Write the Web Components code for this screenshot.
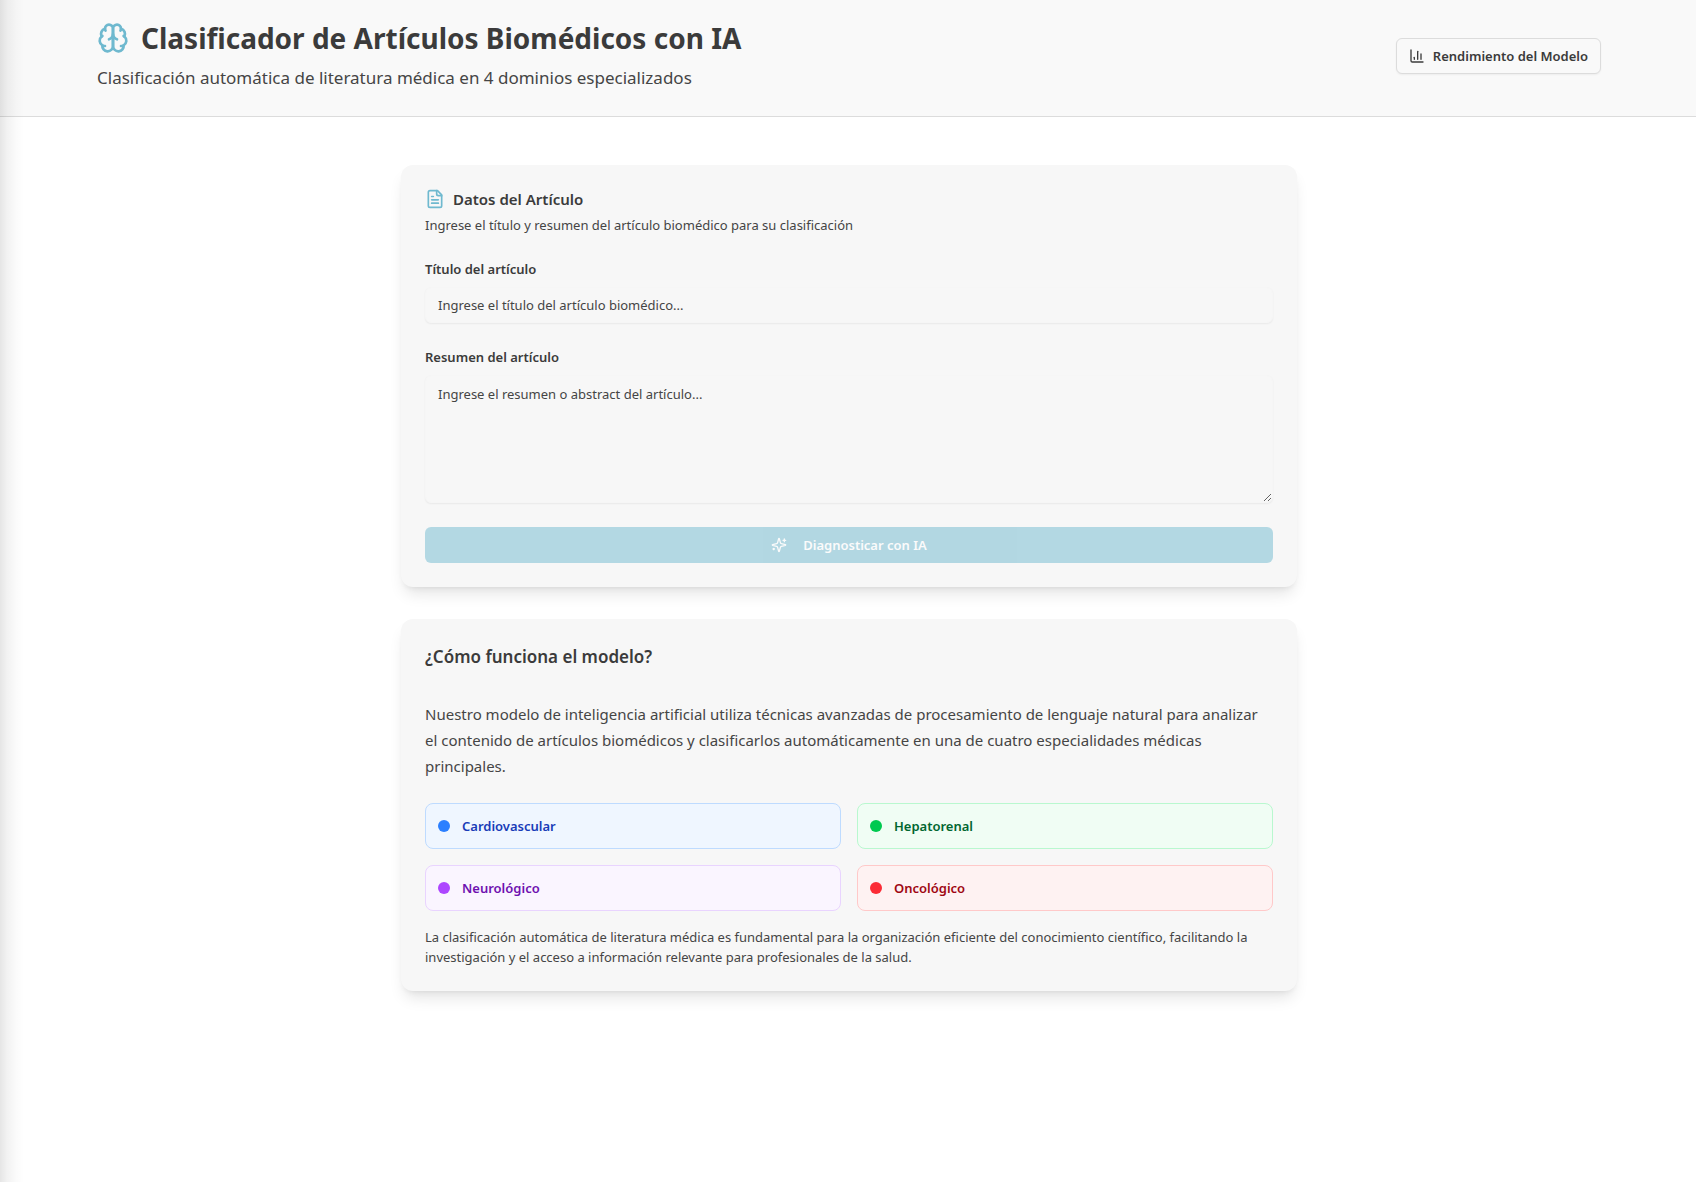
<!DOCTYPE html>
<html lang="es">
<head>
<meta charset="utf-8">
<meta name="viewport" content="width=device-width, initial-scale=1">
<title>Clasificador de Artículos Biomédicos con IA</title>
<style>
  :root {
    --ink: #3b3b3b;
    --muted: #454545;
    --accent: #6fb9cf;
    --card: #f7f7f7;
    --line: #dcdcdc;
    --text-sm: 13px;
    --text-md: 15px;
    --sans: "Segoe UI", "Noto Sans", "Open Sans", sans-serif;
  }
  body {
    margin: 0;
    min-height: 100vh;
    background: #fff;
    color: var(--ink);
    font-family: var(--sans);
    font-size: var(--text-md);
  }
</style>
</head>
<body>
<app-shell>
  <app-header slot="header">
    <ui-icon slot="icon" name="brain" size="32"></ui-icon>
    <span slot="title">Clasificador de Artículos Biomédicos con IA</span>
    <span slot="subtitle">Clasificación automática de literatura médica en 4 dominios especializados</span>
    <action-button slot="action" icon="chart">Rendimiento del Modelo</action-button>
  </app-header>
  <article-form></article-form>
  <model-info></model-info>
</app-shell>

<script>
const define = (name, html, setup) => {
  const template = document.createElement('template');
  template.innerHTML = '<style>*{box-sizing:border-box}h1,h2,p{margin:0}</style>' + html;
  customElements.define(name, class extends HTMLElement {
    connectedCallback() {
      if (this.shadowRoot) return;
      this.attachShadow({ mode: 'open' }).append(template.content.cloneNode(true));
      if (setup) setup(this, this.shadowRoot);
    }
  });
};

const ICONS = {
  brain: '<path d="M12 5a3 3 0 1 0-5.997.125 4 4 0 0 0-2.526 5.77 4 4 0 0 0 .556 6.588A4 4 0 1 0 12 18Z"/><path d="M12 5a3 3 0 1 1 5.997.125 4 4 0 0 1 2.526 5.77 4 4 0 0 1-.556 6.588A4 4 0 1 1 12 18Z"/><path d="M15 13a4.5 4.5 0 0 1-3-4 4.5 4.5 0 0 1-3 4"/><path d="M17.599 6.5a3 3 0 0 0 .399-1.375"/><path d="M6.003 5.125A3 3 0 0 0 6.401 6.5"/><path d="M3.477 10.896a4 4 0 0 1 .585-.396"/><path d="M19.938 10.5a4 4 0 0 1 .585.396"/><path d="M6 18a4 4 0 0 1-1.967-.516"/><path d="M19.967 17.484A4 4 0 0 1 18 18"/>',
  chart: '<path d="M3 3v16a2 2 0 0 0 2 2h16"/><path d="M18 17V9"/><path d="M13 17V5"/><path d="M8 17v-3"/>',
  file: '<path d="M15 2H6a2 2 0 0 0-2 2v16a2 2 0 0 0 2 2h12a2 2 0 0 0 2-2V7Z"/><path d="M14 2v4a2 2 0 0 0 2 2h4"/><path d="M10 9H8"/><path d="M16 13H8"/><path d="M16 17H8"/>',
  sparkles: '<path d="M9.937 15.5A2 2 0 0 0 8.5 14.063l-6.135-1.582a.5.5 0 0 1 0-.962L8.5 9.936A2 2 0 0 0 9.937 8.5l1.582-6.135a.5.5 0 0 1 .963 0L14.063 8.5A2 2 0 0 0 15.5 9.937l6.135 1.581a.5.5 0 0 1 0 .964L15.5 14.063a2 2 0 0 0-1.437 1.437l-1.582 6.135a.5.5 0 0 1-.963 0z"/><path d="M20 3v4"/><path d="M22 5h-4"/><path d="M4 17v2"/><path d="M5 18H3"/>'
};

define('ui-icon', `
  <style>
    :host { display: block; flex: none; line-height: 0; }
    svg { display: block; fill: none; stroke: currentColor; stroke-width: 2; stroke-linecap: round; stroke-linejoin: round; }
  </style>
  <svg viewBox="0 0 24 24" aria-hidden="true"></svg>`,
  (host, root) => {
    const svg = root.querySelector('svg');
    const size = host.getAttribute('size') || 16;
    svg.setAttribute('width', size);
    svg.setAttribute('height', size);
    svg.innerHTML = ICONS[host.getAttribute('name')];
  });

define('app-shell', `
  <style>
    :host { display: block; min-height: 100vh; position: relative; }
    main { box-sizing: content-box; max-width: 896px; margin: 0 auto; padding: 48px 16px; display: grid; gap: 32px; }
    .wrap { padding-left: 2px; }
    .edge { position: absolute; inset: 0 auto 0 0; width: 24px; pointer-events: none;
      background: linear-gradient(90deg, rgba(0,0,0,.1), rgba(0,0,0,.05) 30%, rgba(0,0,0,.02) 65%, transparent); }
  </style>
  <slot name="header"></slot>
  <div class="wrap"><main><slot></slot></main></div>
  <div class="edge"></div>`);

define('app-header', `
  <style>
    :host { display: block; padding-left: 2px; background: #f9f9f9; border-bottom: 1px solid var(--line); }
    header { max-width: 1536px; margin: 0 auto; padding: 20px 16px 24px; display: flex; align-items: center; justify-content: space-between; gap: 24px; }
    .brand { display: flex; align-items: center; gap: 12px; }
    ::slotted(ui-icon) { color: var(--accent); }
    h1 { font-size: 28px; line-height: 36px; font-weight: 700; }
    p { margin-top: 8px; font-size: 17px; line-height: 28px; color: var(--muted); }
  </style>
  <header>
    <div>
      <div class="brand"><slot name="icon"></slot><h1><slot name="title"></slot></h1></div>
      <p><slot name="subtitle"></slot></p>
    </div>
    <slot name="action"></slot>
  </header>`);

define('action-button', `
  <style>
    :host { display: block; flex: none; }
    button { display: flex; align-items: center; justify-content: center; gap: 8px; width: 100%; height: 36px; padding: 0 12px;
      border: 1px solid var(--line); border-radius: 6px; background: #f9f9f9; color: var(--ink);
      font: 600 var(--text-sm)/20px var(--sans); box-shadow: 0 1px 2px rgba(0,0,0,.05); }
    :host([primary]) button { gap: 16px; border: 0; background: var(--accent); color: #fff; box-shadow: none; }
    button:disabled { opacity: .5; }
  </style>
  <button type="button"><ui-icon></ui-icon><span><slot></slot></span></button>`,
  (host, root) => {
    const icon = document.createElement('ui-icon');
    icon.setAttribute('name', host.getAttribute('icon'));
    root.querySelector('ui-icon').replaceWith(icon);
    root.querySelector('button').disabled = host.hasAttribute('disabled');
  });

define('ui-card', `
  <style>
    :host { display: block; padding: 24px; border-radius: 12px; background: var(--card);
      box-shadow: 0 10px 15px -3px rgba(0,0,0,.1), 0 4px 6px -4px rgba(0,0,0,.1); }
    .stack { display: flex; flex-direction: column; gap: 24px; }
  </style>
  <div class="stack"><slot></slot></div>`);

define('form-field', `
  <style>
    :host { display: flex; flex-direction: column; gap: 8px; }
    label { font-size: var(--text-sm); line-height: 20px; font-weight: 600; }
    input, textarea { display: block; width: 100%; margin: 0; border: 1px solid #f6f6f6; border-radius: 6px; outline: 0;
      background: var(--card); color: var(--ink); font: 400 var(--text-sm)/20px var(--sans);
      box-shadow: 0 1px 2px rgba(0,0,0,.06); }
    input { height: 36px; padding: 4px 12px; }
    textarea { height: 128px; padding: 8px 12px; resize: vertical; }
    ::placeholder { color: var(--muted); opacity: 1; }
  </style>
  <label for="control"></label>`,
  (host, root) => {
    root.querySelector('label').textContent = host.getAttribute('label');
    const control = document.createElement(host.hasAttribute('multiline') ? 'textarea' : 'input');
    control.id = 'control';
    control.placeholder = host.getAttribute('placeholder');
    root.append(control);
  });

define('article-form', `
  <style>
    :host { display: block; }
    .head { display: flex; flex-direction: column; gap: 6px; }
    .title { display: flex; align-items: center; gap: 8px; }
    ui-icon { color: var(--accent); }
    h2 { font-size: var(--text-md); line-height: 20px; font-weight: 600; }
    p { font-size: var(--text-sm); line-height: 20px; color: var(--muted); }
  </style>
  <ui-card>
    <div class="head">
      <div class="title"><ui-icon name="file" size="20"></ui-icon><h2>Datos del Artículo</h2></div>
      <p>Ingrese el título y resumen del artículo biomédico para su clasificación</p>
    </div>
    <form-field label="Título del artículo" placeholder="Ingrese el título del artículo biomédico..."></form-field>
    <form-field multiline label="Resumen del artículo" placeholder="Ingrese el resumen o abstract del artículo..."></form-field>
    <action-button primary disabled icon="sparkles">Diagnosticar con IA</action-button>
  </ui-card>`);

define('domain-tile', `
  <style>
    :host { display: flex; align-items: center; gap: 12px; padding: 12px; border: 1px solid var(--edge); border-radius: 8px;
      background: var(--fill); color: var(--text); font-size: var(--text-sm); line-height: 20px; font-weight: 600; }
    :host([tone=blue]) { --fill: #eff6ff; --edge: #bedbff; --dot: #2b7fff; --text: #193cb8; }
    :host([tone=green]) { --fill: #f0fdf4; --edge: #b9f8cf; --dot: #00c950; --text: #016630; }
    :host([tone=purple]) { --fill: #faf5ff; --edge: #e9d4ff; --dot: #ad46ff; --text: #6e11b0; }
    :host([tone=red]) { --fill: #fef2f2; --edge: #ffc9c9; --dot: #fb2c36; --text: #9f0712; }
    i { width: 12px; height: 12px; border-radius: 50%; background: var(--dot); }
  </style>
  <i></i><span><slot></slot></span>`);

define('model-info', `
  <style>
    :host { display: block; }
    h2 { font-size: 17px; line-height: 28px; font-weight: 600; padding-bottom: 6px; }
    .body { display: flex; flex-direction: column; gap: 16px; }
    .lead { font-size: var(--text-md); line-height: 26px; padding: 0 8px 8px 0; color: var(--muted); }
    .grid { display: grid; grid-template-columns: 1fr 1fr; gap: 16px; }
    .note { font-size: var(--text-sm); line-height: 20px; color: var(--muted); }
  </style>
  <ui-card>
    <h2>¿Cómo funciona el modelo?</h2>
    <div class="body">
      <p class="lead">Nuestro modelo de inteligencia artificial utiliza técnicas avanzadas de procesamiento de lenguaje natural para analizar el contenido de artículos biomédicos y clasificarlos automáticamente en una de cuatro especialidades médicas principales.</p>
      <div class="grid">
        <domain-tile tone="blue">Cardiovascular</domain-tile>
        <domain-tile tone="green">Hepatorenal</domain-tile>
        <domain-tile tone="purple">Neurológico</domain-tile>
        <domain-tile tone="red">Oncológico</domain-tile>
      </div>
      <p class="note">La clasificación automática de literatura médica es fundamental para la organización eficiente del conocimiento científico, facilitando la investigación y el acceso a información relevante para profesionales de la salud.</p>
    </div>
  </ui-card>`);
</script>
</body>
</html>
